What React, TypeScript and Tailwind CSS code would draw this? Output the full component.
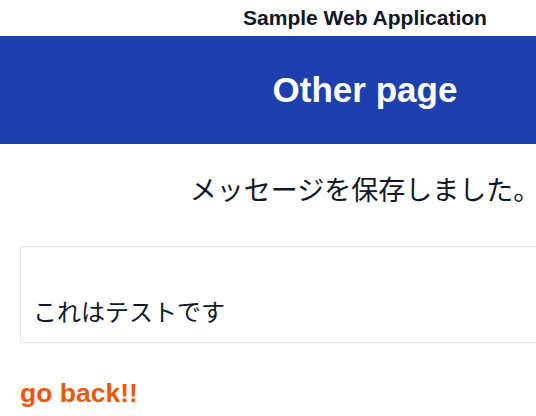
export default function App() {
  return (
    <div className="w-[730px] bg-white text-gray-900 font-['Liberation_Sans','Noto_Sans_CJK_JP',sans-serif]">
      {/* header */}
      <div className="h-9 flex items-center justify-center">
        <h1 className="text-[21px] font-bold">Sample Web Application</h1>
      </div>

      <div className="h-[108px] bg-[#1e40af] flex items-center justify-center">
        <h2 className="text-[35px] font-bold text-white">Other page</h2>
      </div>

      <div className="px-5 pt-[29px] pb-10">
        <p className="text-[27px] leading-9 text-center mb-[37px]">メッセージを保存しました。</p>

        <div className="border border-gray-200 px-3 pt-3 pb-[11px]">
          <p className="text-2xl leading-9 whitespace-pre-wrap">{"\nこれはテストです"}</p>
        </div>

        <a href="#" className="block mt-[34px] text-[26.5px] leading-8 font-bold text-[#ea580c]">
          go back!!
        </a>
      </div>
    </div>
  );
}
